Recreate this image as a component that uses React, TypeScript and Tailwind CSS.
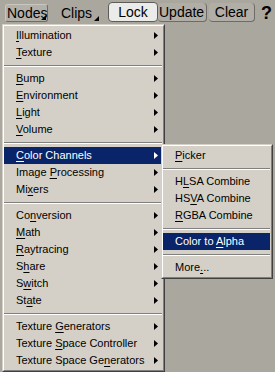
import React from "react";

type Item = { label: string; u: number; arrow?: boolean; hl?: boolean } | "sep";

const mainItems: Item[] = [
  { label: "Illumination", u: 0, arrow: true },
  { label: "Texture", u: 0, arrow: true },
  "sep",
  { label: "Bump", u: 0, arrow: true },
  { label: "Environment", u: 0, arrow: true },
  { label: "Light", u: 0, arrow: true },
  { label: "Volume", u: 0, arrow: true },
  "sep",
  { label: "Color Channels", u: 0, arrow: true, hl: true },
  { label: "Image Processing", u: 6, arrow: true },
  { label: "Mixers", u: 2, arrow: true },
  "sep",
  { label: "Conversion", u: 2, arrow: true },
  { label: "Math", u: 0, arrow: true },
  { label: "Raytracing", u: 0, arrow: true },
  { label: "Share", u: 1, arrow: true },
  { label: "Switch", u: 1, arrow: true },
  { label: "State", u: 2, arrow: true },
  "sep",
  { label: "Texture Generators", u: 8, arrow: true },
  { label: "Texture Space Controller", u: 8, arrow: true },
  { label: "Texture Space Generators", u: 16, arrow: true },
];

const subItems: Item[] = [
  { label: "Picker", u: 0 },
  "sep",
  { label: "HLSA Combine", u: 1 },
  { label: "HSVA Combine", u: 2 },
  { label: "RGBA Combine", u: 0 },
  "sep",
  { label: "Color to Alpha", u: 9, hl: true },
  "sep",
  { label: "More...", u: 4 },
];

function Label({ text, u }: { text: string; u: number }) {
  return (
    <span className="whitespace-pre">
      {text.slice(0, u)}
      <span className="underline decoration-1 underline-offset-[2px]">{text.slice(u, u + 1)}</span>
      {text.slice(u + 1)}
    </span>
  );
}

function MenuList({ items }: { items: Item[] }) {
  return (
    <>
      {items.map((it, i) =>
        it === "sep" ? (
          <div key={i} className="h-[9px] flex flex-col justify-center">
            <div className="h-px bg-[#808080]" />
            <div className="h-px bg-white" />
          </div>
        ) : (
          <div
            key={i}
            className={
              "h-[17px] flex items-center justify-between pl-[12px] pr-[4px] " +
              (it.hl ? "bg-[#0a246a] text-white" : "text-black")
            }
          >
            <Label text={it.label} u={it.u} />
            {it.arrow && (
              <svg width="4" height="7" viewBox="0 0 4 7" className="shrink-0">
                <path d="M0 0 L4 3.5 L0 7 Z" fill={it.hl ? "#ffffff" : "#000000"} />
              </svg>
            )}
          </div>
        )
      )}
    </>
  );
}

function Corner() {
  return (
    <svg width="5" height="5" viewBox="0 0 5 5" className="absolute right-[1px] bottom-[1px]">
      <path d="M5 0 L5 5 L0 5 Z" fill="#000" />
    </svg>
  );
}

export default function App() {
  return (
    <div
      className="w-[275px] h-[372px] bg-[#aaa79f] relative overflow-hidden"
      style={{ fontFamily: '"Liberation Sans", Arial, sans-serif' }}
    >
      {/* toolbar */}
      <div className="h-[24px] flex items-start pl-[5px] text-[14px] text-black leading-none">
        <div className="relative mt-[4px] w-[43px] h-[18px] rounded-[3px] bg-[#b3b0a9] border border-t-[#c9c6bf] border-l-[#c9c6bf] border-r-[#6f6c66] border-b-[#6f6c66] flex items-center pl-[1px]">
          <span>Nodes</span>
          <Corner />
        </div>
        <div className="relative mt-[4px] ml-[9px] w-[43px] h-[18px] flex items-center pl-[4px]">
          <span>Clips</span>
          <Corner />
        </div>
        <div className="mt-[2px] ml-[8px] w-[50px] h-[20px] rounded-[4px] bg-[#ebebea] border border-[#5e5c58] flex items-center justify-center">
          <span>Lock</span>
        </div>
        <div className="mt-[3px] w-[49px] h-[19px] rounded-[4px] bg-[#b1aea7] border-r border-b border-[#6e6b65] flex items-center pl-[1px]">
          <span>Update</span>
        </div>
        <div className="mt-[3px] ml-[2px] w-[46px] h-[19px] rounded-[4px] bg-[#b1aea7] border-r border-b border-[#6e6b65] flex items-center justify-center">
          <span>Clear</span>
        </div>
        <div className="mt-[4px] ml-[6px] text-[18px] font-bold leading-none">?</div>
      </div>

      {/* main dropdown menu */}
      <div className="absolute left-[2px] top-[24px] w-[163px] h-[348px] bg-[#d4d0c8] border border-t-[#d4d0c8] border-l-[#d4d0c8] border-r-[#404040] border-b-[#404040] text-[11px]">
        <div className="h-full border border-t-white border-l-white border-r-[#808080] border-b-[#808080] py-[1px] pr-[1px]">
          <MenuList items={mainItems} />
        </div>
      </div>

      {/* submenu */}
      <div className="absolute left-[161px] top-[144px] w-[112px] h-[135px] bg-[#d4d0c8] border border-t-[#d4d0c8] border-l-[#d4d0c8] border-r-[#404040] border-b-[#404040] text-[11px]">
        <div className="h-full border border-t-white border-l-white border-r-[#808080] border-b-[#808080] py-[1px] pr-[1px]">
          <MenuList items={subItems} />
        </div>
      </div>
    </div>
  );
}
